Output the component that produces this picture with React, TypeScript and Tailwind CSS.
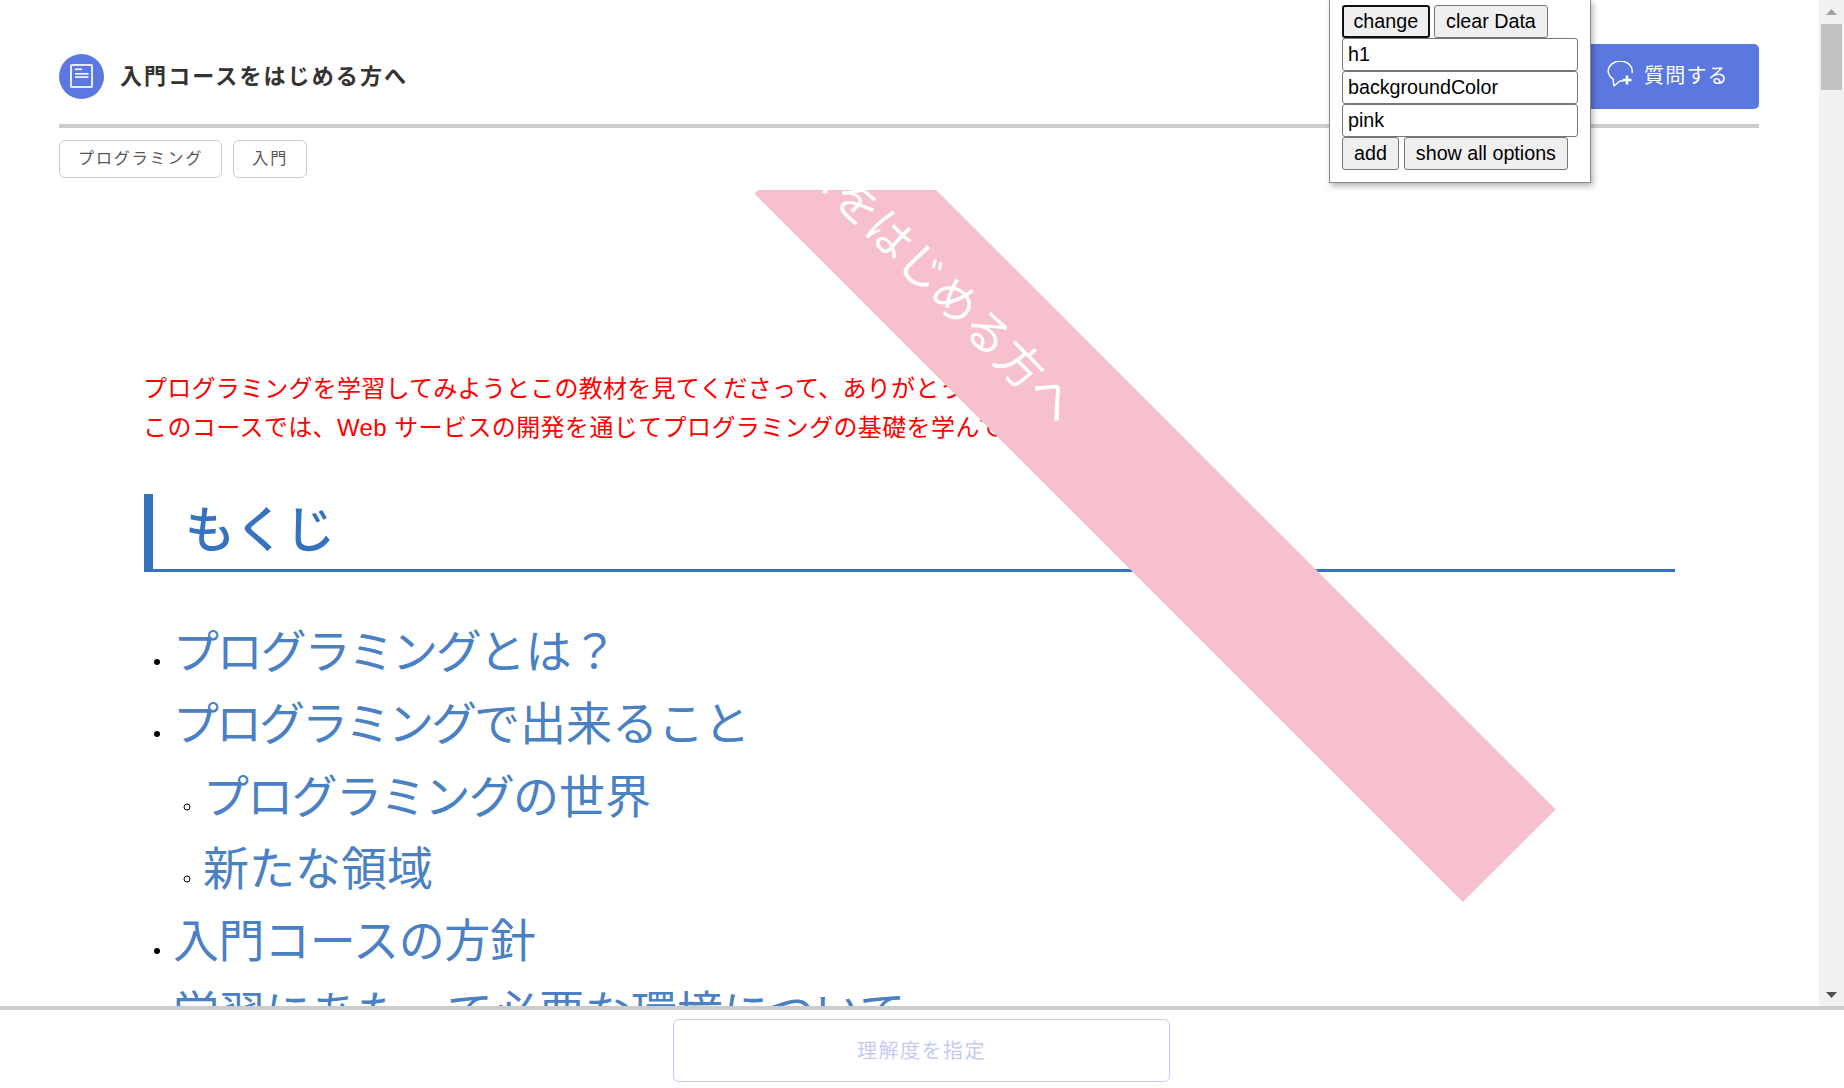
import type { ReactNode } from "react";

const JP = "font-['Liberation_Sans','Noto_Sans_CJK_JP',sans-serif]";

const NoteIcon = () => (
  <svg width="45" height="45" viewBox="0 0 45 45" className="shrink-0">
    <circle cx="22.5" cy="22.5" r="22.5" fill="#5a78e0" />
    <rect x="12" y="11" width="21" height="22" rx="1" fill="none" stroke="#e6eafb" strokeWidth="2" />
    <rect x="16" y="14.5" width="7" height="1.6" fill="#fff" />
    <rect x="16" y="19" width="13.5" height="1.6" fill="#fff" />
    <rect x="16" y="22.3" width="13.5" height="1.6" fill="#fff" />
  </svg>
);

const AskIcon = () => (
  <svg width="30" height="30" viewBox="0 0 30 30" fill="none" stroke="#fff" strokeWidth="1.5" className="shrink-0">
    <path d="M25 12A12 10 0 1 0 6 18L7 25L13 20L16 20" strokeLinejoin="round" />
    <path d="M20 14.5v9M15.5 19h9" strokeWidth="2.5" />
  </svg>
);

const nativeBtn = "h-[33px] shrink-0 rounded-[3px] border border-[#767676] bg-[#efefef] px-[11px] text-[19.7px] text-black";
const focusedBtn = "h-[33px] shrink-0 rounded-[3px] border-2 border-[#101010] bg-[#efefef] px-[9.5px] text-[19.7px] text-black";
const nativeInput = "block h-[33px] w-[236px] rounded-[3px] border border-[#767676] bg-white px-[5px] text-[19.7px] text-black";
const tag = "flex h-[38px] items-center rounded-[6px] border border-[#cccccc] px-[18px] text-[16px] tracking-[1.9px] text-[#555555]";

const TocItem = ({ children, sub, className = "" }: { children: ReactNode; sub?: boolean; className?: string }) => (
  <li className={sub ? "list-[circle]" : "list-disc"}>
    <span className={`text-[46px] leading-[72.3px] text-[#4a80c4] ${className}`}>{children}</span>
  </li>
);

export default function App() {
  return (
    <div className={`${JP} flex h-[1088px] w-full flex-col overflow-hidden bg-white`}>
      <div className="flex h-[1006px] shrink-0">
        <main className="relative flex min-w-0 flex-1 flex-col">
          <header className="ml-[59px] mr-[60px] flex h-[128px] shrink-0 items-center justify-between border-b-4 border-[#cccccc] pb-[3px] pt-[31px]">
            <div className="flex items-center gap-[16px]">
              <NoteIcon />
              <h1 className="text-[22px] font-bold tracking-[2.1px] text-[#333333]">入門コースをはじめる方へ</h1>
            </div>
            <button className="flex h-[65px] w-[182px] items-center gap-[7px] rounded-[5px] bg-[#5a78e0] pl-[30px] text-[20px] tracking-[1.2px] text-white">
              <AskIcon />
              質問する
            </button>
          </header>

          <div className="mx-[59px] flex h-[62px] shrink-0 gap-[11px] pt-[12px]">
            <span className={tag}>プログラミング</span>
            <span className={tag}>入門</span>
          </div>

          <article className="relative min-h-0 flex-1 overflow-hidden px-[144px] pt-[179px]">
            <div className="-ml-[1px] text-[24px] leading-[39px] text-[#ff0000]">
              <p className="tracking-[0.25px]">プログラミングを学習してみようとこの教材を見てくださって、ありがとうございます。</p>
              <p className="tracking-[0.4px]">このコースでは、Web サービスの開発を通じてプログラミングの基礎を学んでいきます。</p>
            </div>
            <h2 className="mt-[47px] h-[78px] border-b-[3px] border-l-[9px] border-[#3573c0] pl-[32px] text-[50px] font-medium leading-[74px] text-[#3573c0]">もくじ</h2>
            <ul className="mt-[44px] pl-[29px] text-[20px] text-black">
              <TocItem><span className="tracking-[-2.2px]">プログラミング</span>とは？</TocItem>
              <TocItem><span className="tracking-[-3px]">プログラミング</span>で出来ること</TocItem>
              <ul className="pl-[30px]">
                <TocItem sub><span className="tracking-[-1.7px]">プログラミング</span>の世界</TocItem>
                <TocItem sub>新たな領域</TocItem>
              </ul>
              <TocItem className="tracking-[-0.4px]">入門コースの方針</TocItem>
              <TocItem>学習にあたって必要な環境について</TocItem>
            </ul>

            <div className="absolute left-[654px] top-[246px] flex h-[131px] w-[1002px] rotate-45 items-center justify-end whitespace-nowrap bg-[#f6c1cd] pr-[624px] text-[46px] text-white">
              入門コースをはじめる方へ
            </div>
          </article>

          <div className="absolute left-[1329px] top-0 h-[183px] w-[262px] border border-t-0 border-[#8a8a8a] bg-white pl-[12px] pt-[5px] shadow-[2px_3px_6px_rgba(0,0,0,0.3)]">
            <div className="flex gap-[4.5px]">
              <button className={focusedBtn}>change</button>
              <button className={nativeBtn}>clear Data</button>
            </div>
            <input className={nativeInput} defaultValue="h1" />
            <input className={nativeInput} defaultValue="backgroundColor" />
            <input className={nativeInput} defaultValue="pink" />
            <div className="flex gap-[5px]">
              <button className={nativeBtn}>add</button>
              <button className={nativeBtn}>show all options</button>
            </div>
          </div>
        </main>

        <div className="flex w-[25px] shrink-0 flex-col items-center bg-[#f1f1f1]">
          <svg width="25" height="24" viewBox="0 0 25 24" className="shrink-0">
            <path d="M12.5 9l5.5 6H7z" fill="#a3a3a3" />
          </svg>
          <div className="h-[66px] w-[21px] shrink-0 bg-[#c1c1c1]" />
          <div className="flex-1" />
          <svg width="25" height="24" viewBox="0 0 25 24" className="shrink-0">
            <path d="M12.5 16l-5.5-6h11z" fill="#505050" />
          </svg>
        </div>
      </div>

      <footer className="flex flex-1 justify-center border-t-4 border-[#cccccc] pt-[9px]">
        <button className="mr-[1px] h-[63px] w-[497px] rounded-[6px] border border-[#c5cbf2] bg-white text-[20px] tracking-[1.5px] text-[#c5cbf2]">理解度を指定</button>
      </footer>
    </div>
  );
}
